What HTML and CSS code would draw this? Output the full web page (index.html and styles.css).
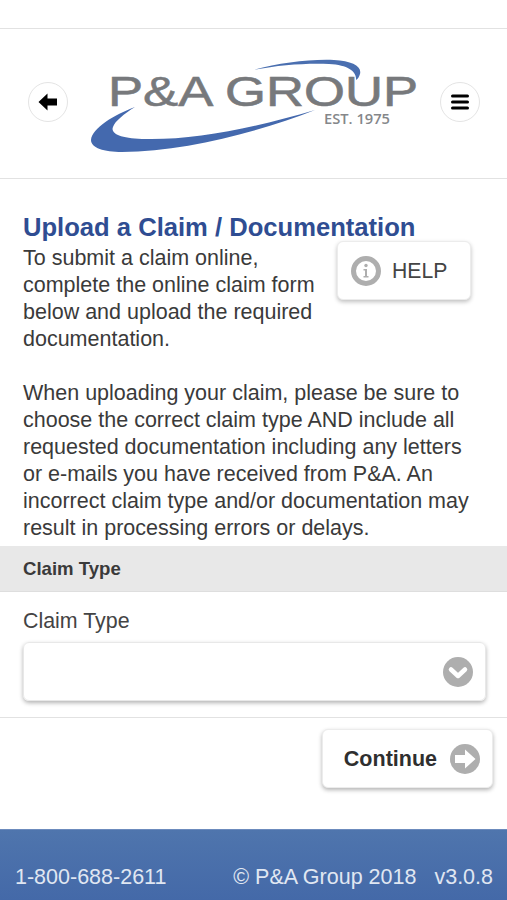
FILE: index.html
```html
<!DOCTYPE html>
<html lang="en">
<head>
    <meta charset="UTF-8">
    <meta name="viewport" content="width=device-width, initial-scale=1.0">
    <title>P&amp;A Group</title>
    <link rel="stylesheet" href="styles.css">
</head>
<body>
    <div class="page">
        <div class="header">
            <button class="round-btn">
                <svg width="22" height="22" viewBox="0 0 22 22"><path d="M1.5 11 10.5 2.5V7.5H20V14.5H10.5V19.5Z" fill="#000"/></svg>
            </button>
            <svg class="logo" width="340" height="110" viewBox="0 0 340 110">
                <path d="M169 20C195 13 225 9 250 10C268 11 278 16 276 24C275 27 274 29 272 30C273 22 265 15 245 14C222 13 195 15 169 20Z" fill="#4a6fb0"/>
                <text class="logo-name" x="24" y="56" textLength="310" lengthAdjust="spacingAndGlyphs">P&amp;A GROUP</text>
                <text class="logo-est" x="240" y="74" textLength="66" lengthAdjust="spacingAndGlyphs">EST. 1975</text>
                <path d="M51 57C30 65 8 78 7 90C7 98 20 102 38 102C100 102 175 82 231 60C170 78 110 90 62 89C38 89 26 84 29 77C31 71 40 64 51 57Z" fill="#4469ae"/>
            </svg>
            <button class="round-btn">
                <svg width="22" height="22" viewBox="0 0 22 22"><path d="M3.5 5H18.5M3.5 11H18.5M3.5 17H18.5" stroke="#000" stroke-width="3" stroke-linecap="round"/></svg>
            </button>
        </div>

        <div class="content">
            <h1>Upload a Claim / Documentation</h1>
            <button class="help-btn">
                <svg width="30" height="30" viewBox="0 0 30 30">
                    <circle cx="15" cy="15" r="12.5" fill="#fff" stroke="#aeaeae" stroke-width="5"/>
                    <circle cx="15" cy="9.5" r="1.7" fill="#aeaeae"/>
                    <path d="M12.5 13H16V20H17.5V21.5H12.5V20H14V14.5H12.5Z" fill="#aeaeae"/>
                </svg>
                HELP
            </button>
            <p>To submit a claim online, complete the online claim form below and upload the required documentation.</p>
            <p class="second">When uploading your claim, please be sure to choose the correct claim type AND include all requested documentation including any letters or e-mails you have received from P&amp;A. An incorrect claim type and/or documentation may result in processing errors or delays.</p>
        </div>

        <div class="section-bar">Claim Type</div>

        <div class="field">
            <label>Claim Type</label>
            <div class="select-box">
                <svg width="30" height="30" viewBox="0 0 30 30">
                    <circle cx="15" cy="15" r="15" fill="#aeaeae"/>
                    <path d="M8 12.5 15 19 22 12.5" fill="none" stroke="#fff" stroke-width="4.5" stroke-linecap="round" stroke-linejoin="round"/>
                </svg>
            </div>
        </div>

        <div class="actions">
            <button class="continue-btn">
                <span class="continue-label">Continue</span>
                <svg width="30" height="30" viewBox="0 0 30 30">
                    <circle cx="15" cy="15" r="15" fill="#aeaeae"/>
                    <path d="M25.5 15 15 5.5V11H5V19H15V24.5Z" fill="#fff"/>
                </svg>
            </button>
        </div>

        <div class="footer">
            <span>1-800-688-2611</span>
            <div class="footer-right">
                <span>&copy; P&amp;A Group 2018</span>
                <span>v3.0.8</span>
            </div>
        </div>
    </div>
</body>
</html>
```

FILE: styles.css
```css
* {
    margin: 0;
    padding: 0;
    box-sizing: border-box;
}

body {
    font-family: "Liberation Sans", Arial, sans-serif;
    background: white;
    color: #3a3a3a;
}

.page {
    height: 900px;
    padding-top: 28px;
    display: flex;
    flex-direction: column;
    overflow: hidden;
}

.header {
    height: 151px;
    border-top: 1px solid #e2e2e2;
    border-bottom: 1px solid #e2e2e2;
    padding: 0 27px 4px 28px;
    display: flex;
    align-items: center;
    justify-content: space-between;
}

.round-btn {
    width: 40px;
    height: 40px;
    border-radius: 50%;
    border: 1px solid #e4e4e4;
    background: white;
    display: flex;
    align-items: center;
    justify-content: center;
    flex-shrink: 0;
}

.logo {
    flex-shrink: 0;
    margin-top: 7px;
}

.logo-name {
    font-size: 42px;
    fill: #77797c;
    stroke: #77797c;
    stroke-width: 0.6px;
}

.logo-est {
    font-family: "Open Sans", sans-serif;
    font-size: 15px;
    font-weight: 600;
    fill: #85878a;
}

.content {
    padding: 32px 22px 0 23px;
    font-size: 21.5px;
    line-height: 27px;
}

.content h1 {
    font-size: 25.6px;
    line-height: 32px;
    font-weight: 700;
    color: #2f4d92;
    margin-bottom: 2px;
}

.content .second {
    margin-top: 27px;
}

.help-btn {
    float: right;
    width: 134px;
    height: 59px;
    margin: -4px 14px 10px 20px;
    border: 1px solid #ececec;
    border-radius: 6px;
    background: white;
    box-shadow: 0 2px 4px rgba(0,0,0,0.25);
    font-family: inherit;
    font-size: 21.2px;
    color: #444;
    display: flex;
    align-items: center;
    gap: 11px;
    padding-left: 13px;
}

.section-bar {
    margin-top: 4px;
    height: 46px;
    padding-left: 23px;
    background: #e8e8e8;
    border-bottom: 1px solid #dedede;
    font-size: 18.6px;
    font-weight: 700;
    line-height: 45px;
    color: #3a3a3a;
}

.field {
    padding: 16px 21px 16px 23px;
    border-bottom: 1px solid #e2e2e2;
}

.field label {
    display: block;
    font-size: 21.4px;
    line-height: 27px;
    margin-bottom: 7px;
    color: #444;
}

.select-box {
    height: 59px;
    border: 1px solid #e8e8e8;
    border-radius: 6px;
    box-shadow: 0 2px 4px rgba(0,0,0,0.3);
    display: flex;
    align-items: center;
    justify-content: flex-end;
    padding-right: 12px;
}

.actions {
    padding: 11px 14px 0 0;
    display: flex;
    justify-content: flex-end;
}

.continue-btn {
    width: 171px;
    height: 59px;
    border: 1px solid #ececec;
    border-radius: 6px;
    background: white;
    box-shadow: 0 2px 4px rgba(0,0,0,0.3);
    font-family: inherit;
    font-size: 21.5px;
    font-weight: 700;
    color: #2f2f2f;
    display: flex;
    align-items: center;
    justify-content: flex-end;
    gap: 13px;
    padding-right: 12px;
}

.continue-label {
    padding-top: 2px;
}

.footer {
    margin-top: auto;
    height: 71px;
    background: linear-gradient(180deg, #4f75ad 0%, #4469a8 100%);
    border-top: 1px solid #6c8bbd;
    color: #e0e7f2;
    font-size: 21.5px;
    padding: 0 14px 10px 15px;
    display: flex;
    align-items: flex-end;
    justify-content: space-between;
}

.footer-right {
    display: flex;
    gap: 18px;
}
```
